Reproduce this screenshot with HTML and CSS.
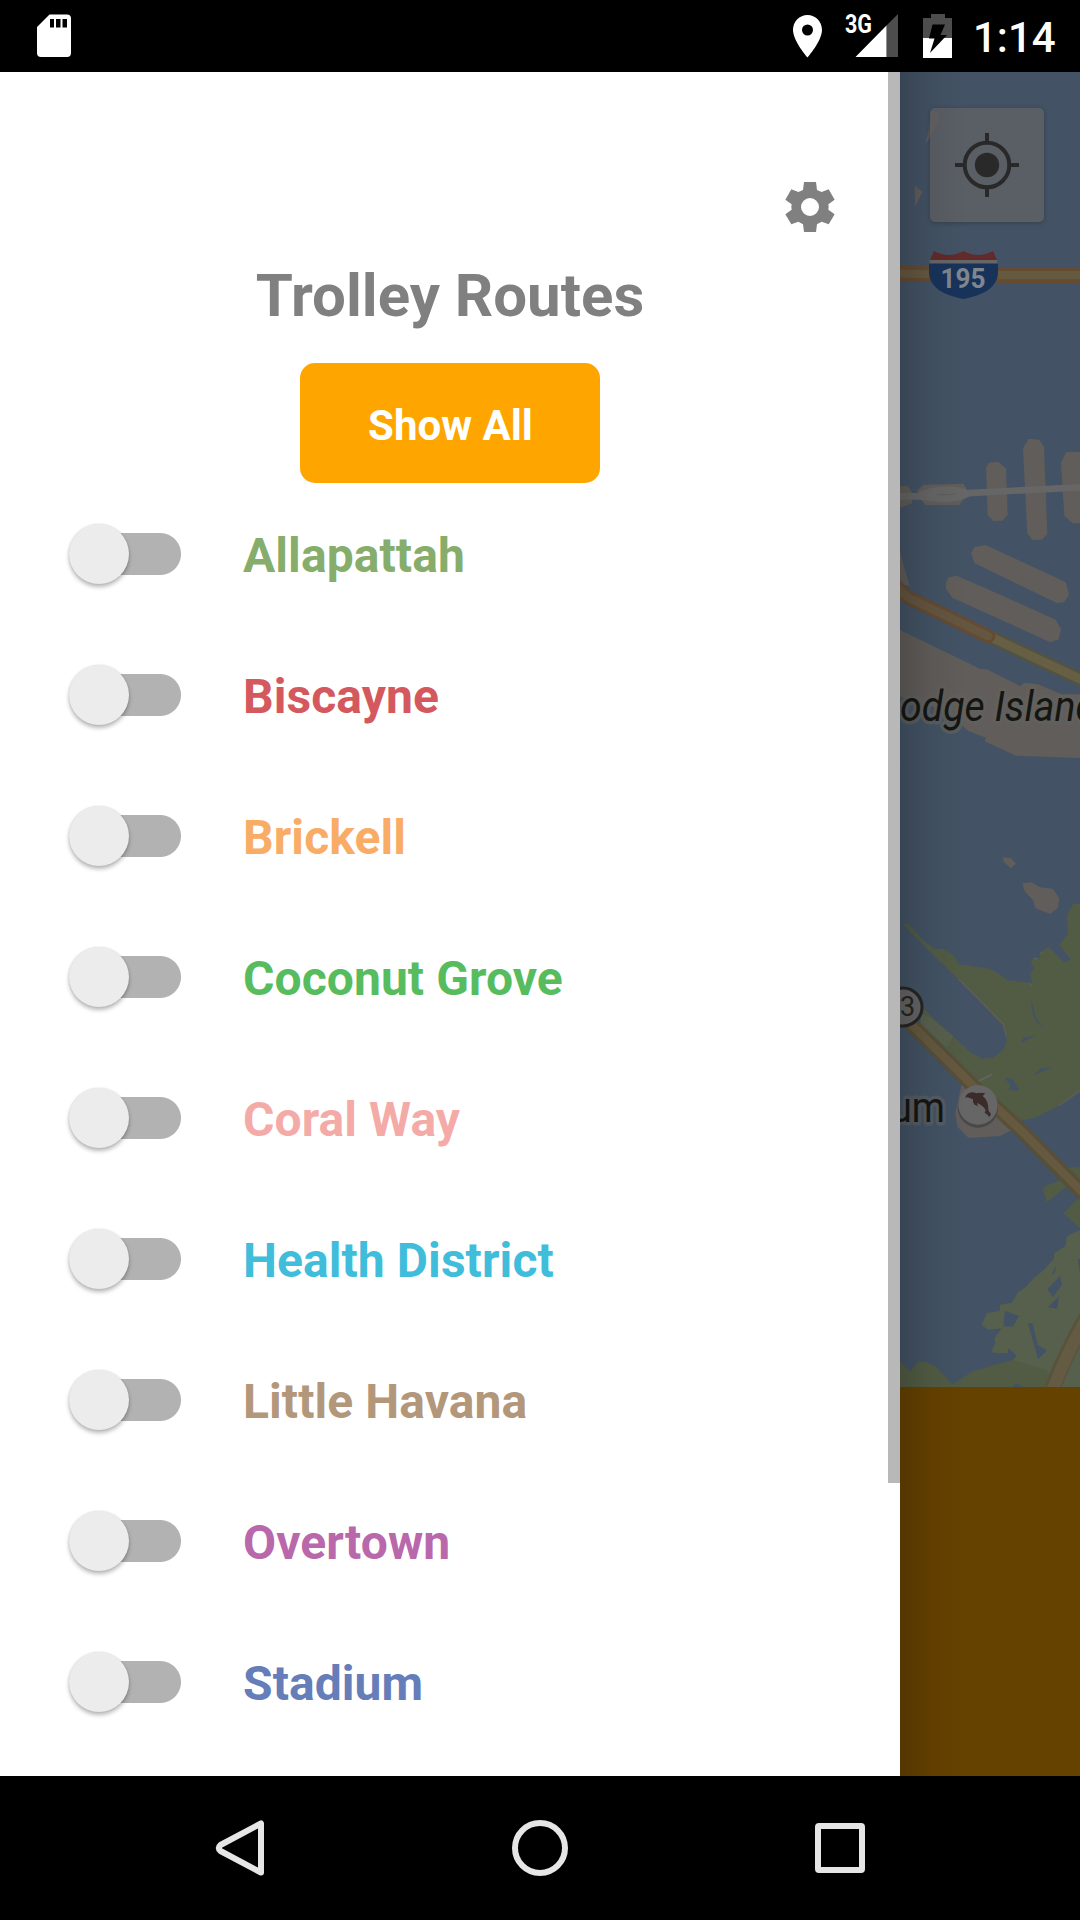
FILE: index.html
```html
<!DOCTYPE html>
<html lang="en">
<head>
<meta charset="utf-8">
<title>Trolley Routes</title>
<link rel="stylesheet" href="styles.css">
</head>
<body>
<div class="screen">
  <header class="status-bar">
    <svg class="sd-icon" width="36" height="44" viewBox="0 0 36 44"><path fill="#fff" fill-rule="evenodd" d="M13.500.5H31a4 4 0 0 1 4 4V39a4 4 0 0 1-4 4H5a4 4 0 0 1-4-4V13zM14 5v8.500h4V5zM20 5v8.500h4.500V5zM26.500 5v8.500H31V5z"/></svg>
    <div class="status-right">
      <svg width="268" height="72" viewBox="780 0 268 72" class="status-icons">
        <path fill="#fff" fill-rule="evenodd" d="M807.500 15C799.500 15 793 21.500 793 30c0 11 14.500 27.500 14.500 27.500S822 41 822 30c0-8.500-6.500-15-14.500-15zm0 9.500a5.500 5.500 0 1 1 0 11 5.500 5.500 0 0 1 0-11z"/>
        <text class="network" x="845" y="33.300" textLength="27" lengthAdjust="spacingAndGlyphs">3G</text>
        <path fill="#4d4d4d" d="M886.500 25.500 898 14v43h-11.500z"/>
        <path fill="#fff" d="M855.500 57 886.500 25.500V57z"/>
        <path fill="#4d4d4d" d="M931 14h14v4h7v20h-29V18h8z"/>
        <path fill="#fff" d="M923 38h29v20h-29z"/>
        <path fill="#000" d="M932.500 24.500H945l-4.500 10.500h6.500l-17 18 4.500-14.500h-5.500z"/>
      </svg>
      <span class="clock">1:14</span>
    </div>
  </header>

  <main class="content">
    <aside class="drawer">
      <div class="toolbar">
        <svg class="gear" width="50" height="50" viewBox="-75 -75 150 150"><path fill="#808080" fill-rule="evenodd" d="M-18-75H18L21-51 35-45 56-53 74-22 55-8Q57 0 55 8L74 22 56 52 35 44 21 52 18 75H-18L-21 52-35 44-56 52-74 22-55 8Q-57 0-55-8L-74-22-56-53-35-45-21-51zM0-27A27 27 0 1 0 0 27 27 27 0 1 0 0-27z"/></svg>
      </div>
      <h1 class="title">Trolley Routes</h1>
      <button class="show-all">Show All</button>
      <ul class="routes">
        <li class="route allapattah"><span class="switch"></span>Allapattah</li>
        <li class="route biscayne"><span class="switch"></span>Biscayne</li>
        <li class="route brickell"><span class="switch"></span>Brickell</li>
        <li class="route coconut-grove"><span class="switch"></span>Coconut Grove</li>
        <li class="route coral-way"><span class="switch"></span>Coral Way</li>
        <li class="route health-district"><span class="switch"></span>Health District</li>
        <li class="route little-havana"><span class="switch"></span>Little Havana</li>
        <li class="route overtown"><span class="switch"></span>Overtown</li>
        <li class="route stadium"><span class="switch"></span>Stadium</li>
      </ul>
      <span class="scrollbar"></span>
    </aside>

    <section class="map-pane">
      <svg class="map" width="180" height="1315" viewBox="900 72 180 1315">
        <!-- north bay and causeway -->
        <g transform="translate(780 0) scale(.33333)">
          <path fill="#605d5a" d="M452 335q24-8 25 14-3 28-19 47l-17 32-3-5 9-40zM404 557l23 18-22 47z"/>
          <path fill="#654b32" d="M360 797 660 803H900V852H660L360 844z"/>
          <path fill="#655940" d="M360 809 660 813H900V838H660L360 833z"/>
        </g>
        <!-- islands and port -->
        <g transform="translate(880 400) scale(.33333)">
          <g fill="#605d5a">
            <path d="M60 258H84l12 18v34L60 324zM131 254 250 251l8 12v26l-20 26H136l-24-30v-14zM318 203l9-15 27-3 24 20 5 140-16 17-27 1-17-18zM429 145l17-29 32 3 14 22 10 260-16 18-28 1-16-20zM543 188l16-32H600V370H578l-25-21zM273 460l10-18 34-7 241 112 9 38-15 22-22 2L284 490zM198 545l8-13 24-5 92 40 205 92 16 28-7 31-25 9L217 593l-19-26zM60 455l12 43 17 60-29-7zM60 690 302 807l18 1 102 51 10-11 40 4 73 31H600V1074L408 1067 314 1024l4-11-53-20-66-60L60 890z"/>
          </g>
          <path fill="none" stroke="#666" stroke-width="20" d="M60 289H130M250 280 600 262"/>
          <path fill="#666" d="M112 279Q145 262 190 259 240 258 268 272V290Q240 304 190 307 145 305 112 298z"/>
          <path fill="none" stroke="#5b5b5b" stroke-width="3" d="M172 284Q200 286 224 282"/>
          <path fill="none" stroke="#535344" stroke-width="42" d="M330 710 610 842"/>
          <path fill="none" stroke="#665f43" stroke-width="27" d="M330 710 610 842"/>
          <path fill="none" stroke="#654b32" stroke-width="42" stroke-linecap="round" d="M50 560Q70 585 95 598L325 709"/>
          <path fill="none" stroke="#655640" stroke-width="25" stroke-linecap="round" d="M50 560Q70 585 95 598L325 709"/>
        </g>
        <text class="place island" x="900" y="721" textLength="197" lengthAdjust="spacingAndGlyphs">odge Island</text>
        <!-- Virginia Key -->
        <g transform="translate(880 800) scale(.33333)">
          <path fill="#605d5a" d="M368 172 394 175 408 191 392 205 371 185zM427 250 455 247 480 262 518 266 538 295 534 323 511 342 466 325 459 300 435 275z"/>
          <path fill="#525c44" d="M69 373H86L132 423 165 447 188 447 220 464 236 493 315 504 345 514 383 541 457 549 450 525 463 505 452 489 461 474 478 477 482 458 506 441 553 488 573 478 538 434 563 403 561 345 580 312H600V872L540 915 470 952 400 966 205 818 130 665 130 622 160 655 220 709 270 757 306 776 340 773 372 748 381 718 372 680 235 537 165 470z"/>
          <path fill="#58604f" d="M125 642 155 655 220 709 200 742 120 672z"/>
          <path fill="#435365" d="M453 598 469 655 491 682 467 663 455 630zM422 730 430 713 468 706zM459 826 484 804 515 804zM373 833 397 836 418 872 386 869 393 858z"/>
          <path fill="none" stroke="#605d5a" stroke-width="4" d="M235 537 370 672 379 710M445 549 457 558M461 474 474 477M480 461 486 455M540 915 600 872"/>
          <path fill="none" stroke="#646461" stroke-width="5" d="M280 851 336 823"/>
        </g>
        <!-- Key Biscayne and the bridge -->
        <g transform="translate(880 1080) scale(.33333)">
          <path fill="#605d5a" d="M244 15 235 60 226 100 232 140 266 174 360 168 435 132 330 45z"/>
          <path fill="#525c44" d="M540 265 600 260V355zM488 322 540 301 560 320 500 366zM600 350 551 400 600 445z"/>
          <path fill="#56604c" d="M600 450 562 468 556 499 522 520V536L493 568 456 600 438 621 414 637 396 668 360 674 359 692 320 700 305 734 324 749 365 745 343 775 347 788 336 810 339 818 382 820 386 805 411 828 385 850 340 855 L500 921H600z"/>
          <path fill="#525c44" d="M60 845 91 875 113 845H138L165 859 218 913 277 875 340 856 400 840 500 870 530 921H60z"/>
          <path fill="#435365" d="M374 692 418 708 398 740 370 739zM444 729 458 730 473 794 501 812 474 838zM502 627 541 588 546 615 518 652zM504 682 537 648 532 686zM513 587 529 556 525 575zM593 537H600V580zM398 917 411 910 425 918V921H400zM386 0 397-4 418 31 386 30 393 18z"/>
          <path fill="none" stroke="#58543c" stroke-width="49" d="M630 695Q565 800 515 930"/>
          <path fill="none" stroke="#655b45" stroke-width="36" d="M633 695Q568 800 518 930"/>
          <path fill="none" stroke="#574f37" stroke-width="44" d="M80-180 L300 38 420 148 615 345"/>
          <path fill="none" stroke="#655940" stroke-width="25" d="M80-180 L300 38 420 148 615 345"/>
          <circle cx="294" cy="82" r="61" fill="#484848"/>
          <circle cx="294" cy="75" r="59" fill="#666"/>
          <path fill="#3b2b2b" d="M256 53Q258 39 278 37L291 40Q303 37 316 40L308 48Q326 62 325 91L333 103 328 111 321 103 314 99 317 90Q309 76 291 69L294 79 284 74 279 67V58L263 52z"/>
        </g>
        <circle cx="903" cy="1007" r="19" fill="#666" stroke="#262626" stroke-width="3"/>
        <text class="badge" x="900" y="1016">3</text>
        <text class="place" x="945" y="1122" text-anchor="end" textLength="54" lengthAdjust="spacingAndGlyphs">um</text>
        <!-- interstate shield -->
        <path fill="#18335a" d="M929 262h69v10c0 15-14 23-34.500 27C943 295 929 287 929 272z"/>
        <path fill="#622a2b" d="M930 260 934 251Q949 259 963.500 251 978 259 993 251L997 260z"/>
        <path fill="#666" d="M930 260h67l1 3.500h-69z"/>
        <text class="interstate" x="963" y="287.500" text-anchor="middle" textLength="45" lengthAdjust="spacingAndGlyphs">195</text>
      </svg>
      <button class="locate" aria-label="My location">
        <svg width="66" height="66" viewBox="-33 -33 66 66"><g fill="none" stroke="#292929" stroke-width="4"><circle r="22.300"/><path d="M0-32v9M0 23v9M-32 0h9M23 0h9"/></g><circle r="12.200" fill="#292929"/></svg>
      </button>
      <div class="info-panel"></div>
    </section>
  </main>

  <nav class="nav-bar">
    <svg width="1080" height="144" viewBox="0 1776 1080 144" fill="none" stroke="#e6e6e6" stroke-width="6" stroke-linejoin="round">
      <path d="M261 1823.500V1872.500L220.500 1851Q217 1848 220.500 1845z"/>
      <circle cx="540" cy="1848" r="25"/>
      <rect x="818" y="1826" width="44" height="44" rx="1"/>
    </svg>
  </nav>
</div>
</body>
</html>
```

FILE: styles.css
```css
* {
  box-sizing: border-box;
}

body {
  margin: 0;
  font-family: Roboto, sans-serif;
}

.screen {
  display: flex;
  flex-direction: column;
  width: 1080px;
  height: 1920px;
  overflow: hidden;
  background: #000;
}

.status-bar {
  display: flex;
  justify-content: space-between;
  align-items: center;
  height: 72px;
  padding-left: 36px;
  color: #fff;
}

.status-right {
  display: flex;
  align-items: center;
  width: 300px;
  height: 72px;
}

.status-icons {
  flex: none;
  margin-right: -75px;
}

.network {
  fill: #fff;
  font-size: 26px;
  font-weight: 700;
}

.clock {
  font-size: 42px;
  font-weight: 500;
  line-height: 72px;
  padding-top: 3px;
}

.content {
  display: flex;
  height: 1704px;
}

.drawer {
  position: relative;
  display: flex;
  flex-direction: column;
  align-items: center;
  width: 900px;
  background: #fff;
}

.toolbar {
  display: flex;
  justify-content: flex-end;
  width: 100%;
  padding: 110px 65px 0 0;
}

.gear {
  display: block;
}

.title {
  margin: 29px 0 0;
  color: #808080;
  font-size: 60px;
  font-weight: 700;
  line-height: 70px;
}

.show-all {
  width: 300px;
  height: 120px;
  margin-top: 32px;
  padding: 4px 0 0 1px;
  border: 0;
  border-radius: 15px;
  background: #ffa500;
  color: #fff;
  font: 700 42px Roboto, sans-serif;
}

.routes {
  width: 100%;
  margin: 0;
  padding: 0;
  list-style: none;
}

.route {
  display: flex;
  align-items: center;
  height: 141px;
  padding: 4px 0 0 68px;
  font-size: 48px;
  font-weight: 700;
  letter-spacing: .08px;
}

.switch {
  display: flex;
  align-items: center;
  width: 113px;
  height: 60px;
  margin: -6px 62px 0 0;
  padding: 1px 0 0 .5px;
  background: linear-gradient(#b2b2b2, #b2b2b2) no-repeat 30px 10px / 62px 42px,
    radial-gradient(circle at 92px 31px, #b2b2b2 20.500px, transparent 21.500px);
}

.switch::before {
  content: "";
  flex: none;
  width: 60px;
  height: 60px;
  margin-bottom: -1px;
  border-radius: 50%;
  background: #ececec;
  box-shadow: 0 3px 4px rgba(0, 0, 0, .28), 0 0 2px rgba(0, 0, 0, .12);
}

.allapattah { color: #86ad6b; }
.biscayne { color: #d3595e; }
.brickell { color: #f8ac66; }
.coconut-grove { color: #57bc5e; }
.coral-way { color: #f4aaa7; }
.health-district { color: #3fbddb; }
.little-havana { color: #b3977b; }
.overtown { color: #b868ab; }
.stadium { color: #657db9; }

.scrollbar {
  position: absolute;
  top: 0;
  right: 0;
  width: 12px;
  height: 1411px;
  background: #b8b8b8;
}

.map-pane {
  position: relative;
  display: flex;
  flex-direction: column;
  width: 180px;
  overflow: hidden;
  background: #435365;
}

.map-pane::after {
  content: "";
  position: absolute;
  inset: 0;
  background: linear-gradient(90deg, rgba(0, 0, 0, .18), rgba(0, 0, 0, .06) 30px, transparent 66px);
}

.map {
  display: block;
  flex: none;
}

.place {
  fill: #151612;
  stroke: #5b6064;
  stroke-width: 7px;
  stroke-opacity: .75;
  stroke-linejoin: round;
  paint-order: stroke;
  font-size: 42px;
}

.island {
  stroke: #62625f;
  font-style: italic;
}

.badge {
  fill: #262626;
  font-size: 27px;
}

.interstate {
  fill: #80868f;
  font-size: 28px;
  font-weight: 700;
}

.locate {
  position: absolute;
  top: 36px;
  left: 30px;
  display: grid;
  place-items: center;
  width: 114px;
  height: 114px;
  padding: 0;
  border: 0;
  border-radius: 5px;
  background: rgba(98, 98, 101, .78);
  box-shadow: 0 1px 5px rgba(0, 0, 0, .25);
}

.info-panel {
  flex: 1;
  background: #664200;
}

.nav-bar {
  height: 144px;
}
```
